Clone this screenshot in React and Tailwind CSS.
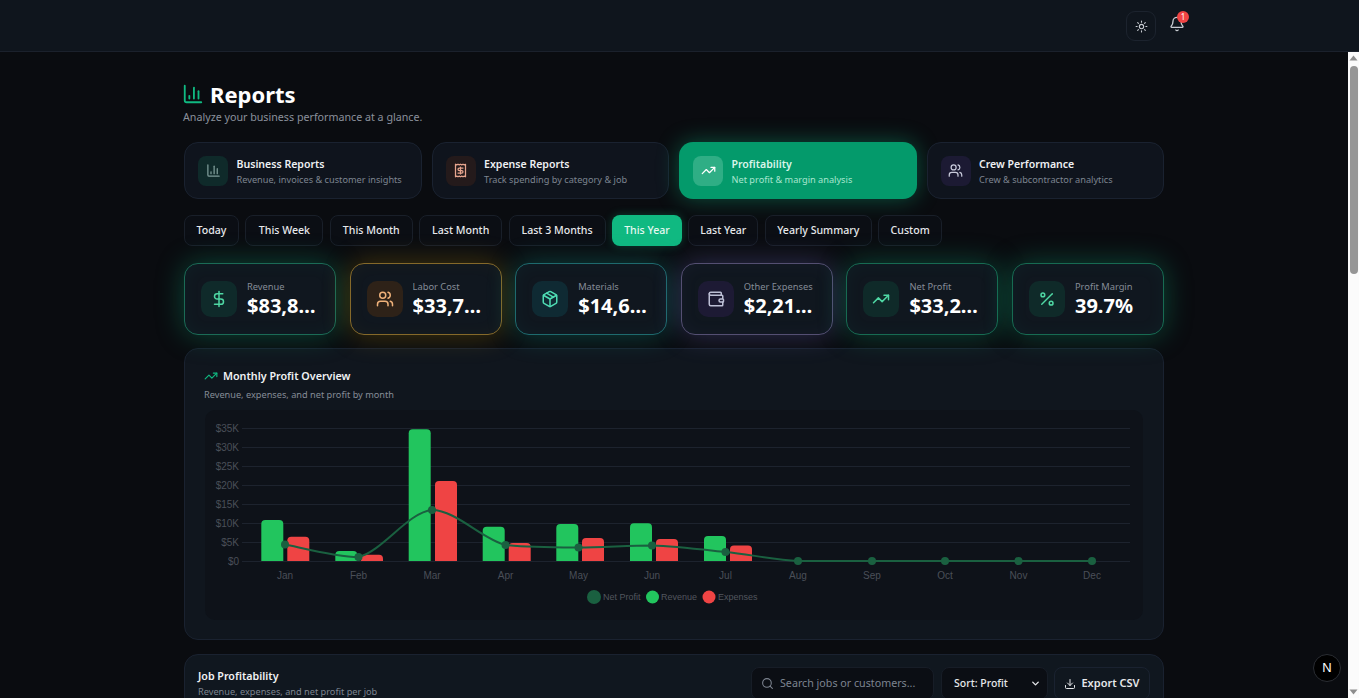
import React from "react";
import { ChartColumn, Receipt, TrendingUp, Users, DollarSign, Package, Wallet, Percent, Sun, Bell, Search, Download, ChevronDown } from "lucide-react";

const tabs = [
  { t: "Business Reports", s: "Revenue, invoices & customer insights", I: ChartColumn, box: "bg-[#0f2a2a]", ic: "text-[#7f9c99]" },
  { t: "Expense Reports", s: "Track spending by category & job", I: Receipt, box: "bg-[#241a1b]", ic: "text-[#e8a58f]" },
  { t: "Profitability", s: "Net profit & margin analysis", I: TrendingUp, active: true },
  { t: "Crew Performance", s: "Crew & subcontractor analytics", I: Users, box: "bg-[#1c1a33]", ic: "text-[#c9cbdc]" },
];
const ranges = [
  ["Today", "w-[55px]"],
  ["This Week", "w-[78px]"],
  ["This Month", "w-[83px]"],
  ["Last Month", "w-[83px]"],
  ["Last 3 Months", "w-[97px]"],
  ["This Year", "w-[70px]"],
  ["Last Year", "w-[70px]"],
  ["Yearly Summary", "w-[107px]"],
  ["Custom", "w-[64px]"],
];
const stats = [
  { l: "Revenue", v: "$83,842.00", I: DollarSign, c: "border-[#1b6b56] shadow-[0_0_28px_rgba(16,185,129,0.34),inset_0_0_18px_rgba(16,185,129,0.05)]", box: "bg-[#0f2a2a]", ic: "text-[#4fd8a4]" },
  { l: "Labor Cost", v: "$33,712.00", I: Users, c: "border-[#85692a] shadow-[0_0_28px_rgba(234,179,8,0.26),inset_0_0_18px_rgba(234,179,8,0.04)]", box: "bg-[#2e2218]", ic: "text-[#f0b27a]" },
  { l: "Materials", v: "$14,630.00", I: Package, c: "border-[#1e6a6e] shadow-[0_0_28px_rgba(20,184,166,0.32),inset_0_0_18px_rgba(20,184,166,0.05)]", box: "bg-[#0f2a33]", ic: "text-[#4fdcb4]" },
  { l: "Other Expenses", v: "$2,214.50", I: Wallet, c: "border-[#544f72] shadow-[0_0_28px_rgba(129,120,220,0.32),inset_0_0_18px_rgba(129,120,220,0.05)]", box: "bg-[#1d1a34]", ic: "text-[#bdbfd6]" },
  { l: "Net Profit", v: "$33,286.00", I: TrendingUp, c: "border-[#176b52] shadow-[0_0_28px_rgba(16,185,129,0.34),inset_0_0_18px_rgba(16,185,129,0.05)]", box: "bg-[#0f2a29]", ic: "text-[#4fd8a4]" },
  { l: "Profit Margin", v: "39.7%", I: Percent, c: "border-[#176b52] shadow-[0_0_28px_rgba(16,185,129,0.34),inset_0_0_18px_rgba(16,185,129,0.05)]", box: "bg-[#0f2a29]", ic: "text-[#4fd8a4]" },
];

const months = [
  ["Jan", 285, 544.5, [261.3, 520], [287.3, 536.7]],
  ["Feb", 358.5, 557, [335.3, 551], [361, 554.7]],
  ["Mar", 432, 510, [408.7, 429.3], [435, 481]],
  ["Apr", 505.5, 545, [482.7, 526.7], [508.7, 543]],
  ["May", 578.5, 547.5, [556.3, 524], [582, 538]],
  ["Jun", 652, 545.5, [630, 523.3], [656, 539]],
  ["Jul", 725.5, 552, [704, 536], [730, 545.5]],
  ["Aug", 798, 561],
  ["Sep", 872, 561],
  ["Oct", 945, 561],
  ["Nov", 1018.5, 561],
  ["Dec", 1092, 561],
];
const base = 561;
const barPath = (x, top) => {
  const w = 22, r = 4;
  return `M${x} ${base}V${top + r}Q${x} ${top} ${x + r} ${top}H${x + w - r}Q${x + w} ${top} ${x + w} ${top + r}V${base}Z`;
};
const linePath = () => {
  const p = months.map((m) => [m[1], m[2]]);
  let d = `M${p[0][0]} ${p[0][1]}`;
  for (let i = 0; i < p.length - 1; i++) {
    const a = p[Math.max(i - 1, 0)], b = p[i], c = p[i + 1], e = p[Math.min(i + 2, p.length - 1)];
    const k = 0.16;
    let c1y = b[1] + (c[1] - a[1]) * k;
    let c2y = c[1] - (e[1] - b[1]) * k;
    c1y = Math.min(Math.max(c1y, Math.min(b[1], c[1])), Math.max(b[1], c[1]));
    c2y = Math.min(Math.max(c2y, Math.min(b[1], c[1])), Math.max(b[1], c[1]));
    d += `C${b[0] + (c[0] - a[0]) * k} ${c1y} ${c[0] - (e[0] - b[0]) * k} ${c2y} ${c[0]} ${c[1]}`;
  }
  return d;
};

function Chart() {
  const ticks = ["$0", "$5K", "$10K", "$15K", "$20K", "$25K", "$30K", "$35K"];
  const font = { fontFamily: '"Liberation Sans", Arial, sans-serif' };
  return (
    <svg width="938" height="210" viewBox="205 410 938 210" className="block" style={font}>
      {ticks.map((t, i) => {
        const y = 561 - i * 19;
        return (
          <g key={t}>
            <line x1="242" x2="1130" y1={y + 0.5} y2={y + 0.5} stroke="#1d232e" />
            <text x="239" y={y + 3.5} textAnchor="end" fontSize="10" fill="#4a4f58">{t}</text>
          </g>
        );
      })}
      {months.map((m) => (
        <g key={m[0]}>
          <text x={m[1]} y="578.5" textAnchor="middle" fontSize="10" fill="#4a4f58">{m[0]}</text>
          {m[3] && <path d={barPath(m[3][0], m[3][1])} fill="#22c55e" />}
          {m[4] && <path d={barPath(m[4][0], m[4][1])} fill="#ef4444" />}
        </g>
      ))}
      <path d={linePath()} fill="none" stroke="#1a6040" strokeWidth="2" />
      {months.map((m) => <circle key={m[0]} cx={m[1]} cy={m[2]} r="4" fill="#1a6040" />)}
      <circle cx="594" cy="597" r="7" fill="#1a6040" />
      <text x="603" y="600" fontSize="9" fill="#52565e">Net Profit</text>
      <circle cx="652.5" cy="597" r="6.5" fill="#22c55e" />
      <text x="661" y="600" fontSize="9" fill="#52565e">Revenue</text>
      <circle cx="709" cy="597" r="6.5" fill="#ef4444" />
      <text x="718" y="600" fontSize="9" fill="#52565e">Expenses</text>
    </svg>
  );
}

function Scrollbar() {
  return (
    <div className="w-[11px] shrink-0 bg-[#fbfbfb] flex flex-col items-center">
      <svg width="9" height="6" viewBox="0 0 9 6" className="mt-[3px] shrink-0"><path d="M4.5 0.5L8.5 5.5H0.5Z" fill="#8d8d8d" /></svg>
      <div className="mt-[5px] h-[208px] w-[8px] rounded-[4px] bg-[#969696] shrink-0" />
      <div className="flex-1" />
      <svg width="9" height="6" viewBox="0 0 9 6" className="mb-[3px] shrink-0"><path d="M4.5 5.5L8.5 0.5H0.5Z" fill="#8d8d8d" /></svg>
    </div>
  );
}

export default function App() {
  return (
    <div className="h-[698px] w-full overflow-hidden flex flex-col bg-[#0a0c10] text-white relative" style={{ fontFamily: '"Noto Sans", "Open Sans", sans-serif' }}>
      <header className="h-[52px] shrink-0 bg-[#0f151d] border-b border-[#1b212c] flex items-center justify-end pr-[169px] gap-[8px]">
        <button className="w-[30px] h-[30px] mt-[1px] rounded-[9px] border border-[#1c232e] flex items-center justify-center text-[#c8ccd2]">
          <Sun size={13} />
        </button>
        <button className="relative w-[26px] h-[26px] -mt-[3px] flex items-center justify-center text-[#c8ccd2]">
          <Bell size={16} />
          <span className="absolute top-0 right-[1px] w-[12px] h-[12px] rounded-full bg-[#ef4444] text-[8px] leading-[12px] text-center text-white">1</span>
        </button>
      </header>
      <div className="flex-1 min-h-0 flex">
        <main className="flex-1 min-w-0 overflow-hidden">
          <div className="w-[980px] mx-auto pt-[27px]">
            <div className="flex items-center gap-[6px] h-[32px]">
              <ChartColumn size={22} className="text-[#10b981] -mt-[3px] -ml-[2px]" />
              <h1 className="text-[22px] leading-[30px] font-bold -mt-[2px]">Reports</h1>
            </div>
            <p className="text-[10.7px] leading-[14px] -mt-[1px] text-[#8a919c] -ml-px">Analyze your business performance at a glance.</p>

            <div className="grid grid-cols-4 gap-[10px] mt-[18px]">
              {tabs.map(({ t, s, I, box, ic, active }) => (
                <div key={t} className={active
                  ? "h-[57px] rounded-[14px] bg-[#049a6b] shadow-[0_0_22px_rgba(16,185,129,0.4)] flex items-center px-[14px] gap-[8.5px]"
                  : "h-[57px] rounded-[14px] bg-[#0f141d] border border-[#1a2230] flex items-center px-[13px] gap-[8.5px]"}>
                  <div className={`w-[30px] h-[30px] rounded-[8px] flex items-center justify-center shrink-0 ${active ? "bg-[#2fae85] text-white" : `${box} ${ic}`}`}>
                    <I size={15} />
                  </div>
                  <div className="min-w-0 mt-[1px]">
                    <div className={`text-[10.55px] leading-[15px] font-semibold whitespace-nowrap ${active ? "text-[#d9f5ea]" : "text-[#eef0f3]"}`}>{t}</div>
                    <div className={`text-[9.2px] leading-[13px] mt-[1px] whitespace-nowrap ${active ? "text-[#a8e6cf]" : "text-[#7d8490]"}`}>{s}</div>
                  </div>
                </div>
              ))}
            </div>

            <div className="flex gap-[6.4px] mt-[16px]">
              {ranges.map(([r, w]) => (
                <button key={r} className={r === "This Year"
                  ? `${w} h-[31px] pt-px rounded-[8px] bg-[#10b981] text-[10.6px] font-medium text-[#e6f8f1] shadow-[0_0_10px_rgba(16,185,129,0.3)]`
                  : `${w} h-[31px] pt-px rounded-[8px] bg-[#0b0e14] border border-[#191f29] text-[10.6px] font-medium text-[#e6e8eb]`}>
                  {r}
                </button>
              ))}
            </div>

            <div className="grid grid-cols-6 gap-[13.6px] mt-[17px]">
              {stats.map(({ l, v, I, c, box, ic }) => (
                <div key={l} className={`h-[72px] rounded-[14px] border bg-[#10171f] flex items-center px-[16px] gap-[10px] ${c}`}>
                  <div className={`w-[36px] h-[36px] rounded-[10px] flex items-center justify-center shrink-0 ${box} ${ic}`}>
                    <I size={18} />
                  </div>
                  <div className="min-w-0 flex-1">
                    <div className="text-[9.3px] leading-[13px] text-[#858c97] truncate">{l}</div>
                    <div className="text-[20px] leading-[24px] mt-[1px] font-bold text-white truncate">{v}</div>
                  </div>
                </div>
              ))}
            </div>

            <section className="mt-[13px] h-[292px] rounded-[14px] border border-[#1a2230] bg-[#10161e] px-[20px] pt-[19px]">
              <div className="flex items-center gap-[5px] h-[16px] -ml-px">
                <TrendingUp size={14} className="text-[#10b981]" />
                <h2 className="text-[10.75px] leading-[16px] font-semibold text-[#f0f2f4]">Monthly Profit Overview</h2>
              </div>
              <p className="text-[9.2px] leading-[13px] text-[#858c97] mt-[4px] -ml-px">Revenue, expenses, and net profit by month</p>
              <div className="mt-[9px] h-[210px] rounded-[10px] bg-[#0e1219]">
                <Chart />
              </div>
            </section>

            <section className="mt-[14px] h-[120px] rounded-[14px] border border-[#1a2230] bg-[#10171f] px-[13px] pt-[12px] flex items-start justify-between">
              <div className="pt-[1px]">
                <h2 className="text-[10.7px] leading-[16px] font-semibold text-[#f0f2f4]">Job Profitability</h2>
                <p className="text-[9.2px] leading-[13px] text-[#7d8490] mt-[1px]">Revenue, expenses, and net profit per job</p>
              </div>
              <div className="flex gap-[7px]">
                <div className="w-[183px] h-[33px] rounded-[8px] bg-[#0b0e14] border border-[#171d27] flex items-center px-[9px] gap-[6px] text-[#7d8490]">
                  <Search size={13} />
                  <span className="text-[10.7px] whitespace-nowrap">Search jobs or customers...</span>
                </div>
                <div className="w-[107px] h-[33px] rounded-[8px] bg-[#0b0e14] border border-[#171d27] flex items-center justify-between px-[12px] text-[#e6e8eb]">
                  <span className="text-[10.5px] font-medium">Sort: Profit</span>
                  <ChevronDown size={11} strokeWidth={3} className="-mr-[6px]" />
                </div>
                <div className="w-[96px] h-[33px] rounded-[8px] bg-[#10171f] border border-[#1a2230] flex items-center justify-center gap-[5px] text-[#e6e8eb] -ml-px">
                  <Download size={12} />
                  <span className="text-[11px] font-semibold">Export CSV</span>
                </div>
              </div>
            </section>
          </div>
        </main>
        <Scrollbar />
      </div>
      <div className="absolute left-[1313px] top-[654px] w-[28px] h-[28px] rounded-full bg-black border border-[#2a2d33] flex items-center justify-center text-[13px] text-white" style={{ fontFamily: '"Liberation Sans", sans-serif' }}>N</div>
    </div>
  );
}
